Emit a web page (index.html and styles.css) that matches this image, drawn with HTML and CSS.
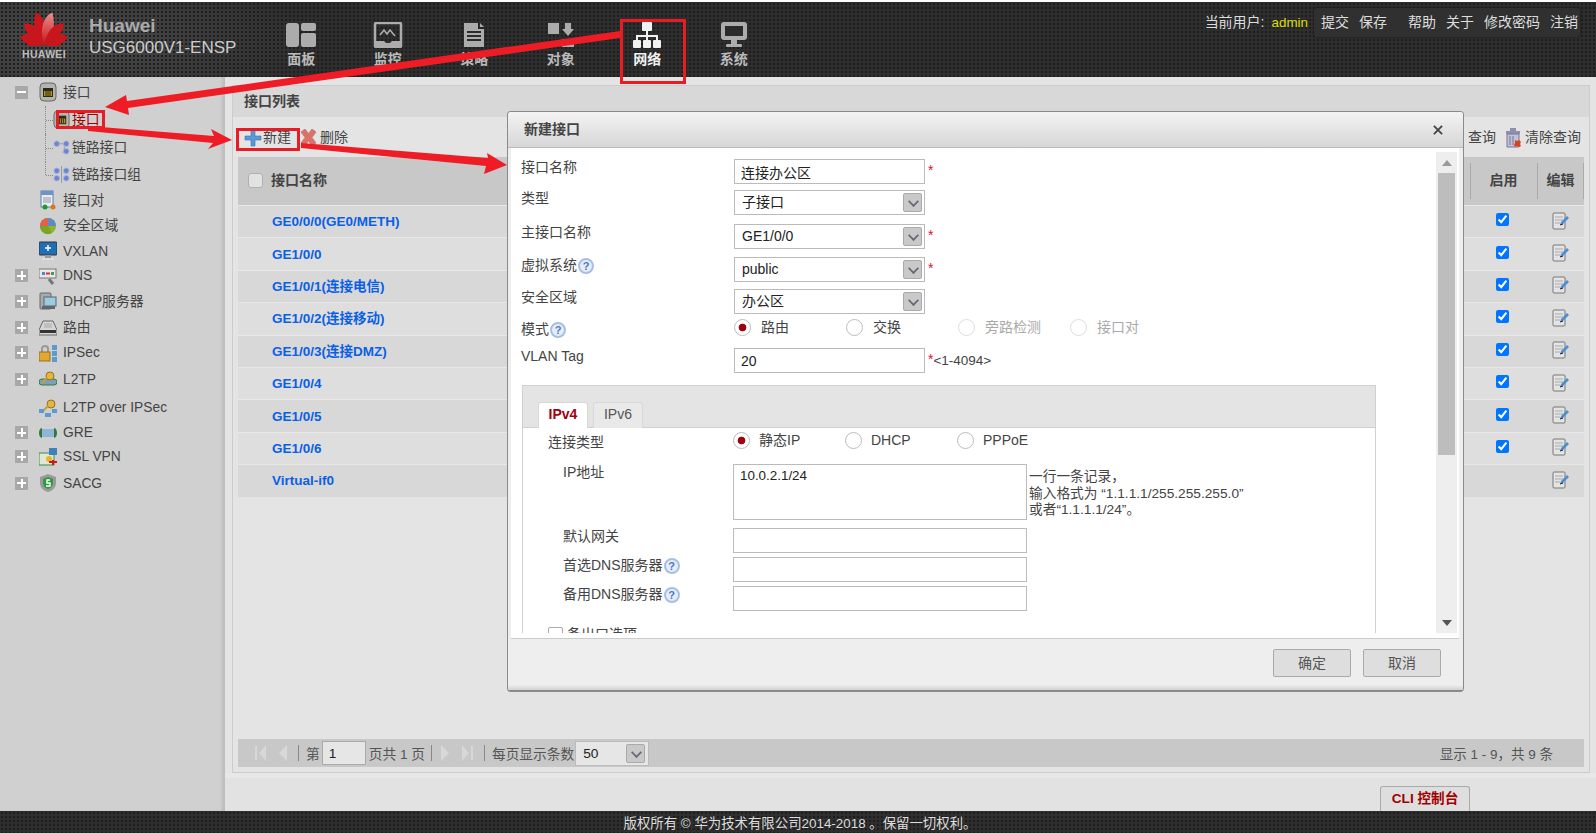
FILE: index.html
```html
<!DOCTYPE html>
<html lang="zh-CN">
<head>
<meta charset="utf-8">
<title>Huawei USG6000V1-ENSP</title>
<link rel="stylesheet" href="styles.css">
</head>
<body>
<svg class="defs" width="0" height="0" aria-hidden="true">
  <symbol id="i-port" viewBox="0 0 18 20"><rect x="1" y="1" width="16" height="18" rx="4" fill="#b5b5ae" stroke="#666"/><rect x="4" y="6" width="10" height="9" fill="#2a2a1e"/><path d="M5 9h8v5H5z" fill="#b8951e"/><path d="M7 9v5M9 9v5M11 9v5" stroke="#2a2a1e"/></symbol>
  <symbol id="i-links" viewBox="0 0 18 18"><path d="M5 5h6M12 8v6M10 14h3" stroke="#999" fill="none"/><circle cx="4" cy="5" r="3" fill="#6f84cf" stroke="#aab6e6"/><circle cx="14" cy="5" r="3" fill="#6f84cf" stroke="#aab6e6"/><circle cx="14" cy="13" r="3" fill="#6f84cf" stroke="#aab6e6"/></symbol>
  <symbol id="i-group" viewBox="0 0 18 18"><path d="M9 0v18" stroke="#999"/><circle cx="4" cy="5" r="3" fill="#6f84cf" stroke="#aab6e6"/><circle cx="14" cy="5" r="3" fill="#6f84cf" stroke="#aab6e6"/><circle cx="4" cy="13" r="3" fill="#6f84cf" stroke="#aab6e6"/><circle cx="14" cy="13" r="3" fill="#6f84cf" stroke="#aab6e6"/></symbol>
  <symbol id="i-pair" viewBox="0 0 18 20"><rect x="2" y="1" width="12" height="16" fill="#e8ecf4" stroke="#5d7fb0"/><path d="M2 1h12v4H2z" fill="#6d93c8"/><path d="M4 8h8M4 10h8M4 12h8" stroke="#999"/><circle cx="6" cy="17" r="2.500" fill="#1d9a2c"/><circle cx="14" cy="17" r="2.500" fill="#e4741a"/></symbol>
  <symbol id="i-zone" viewBox="0 0 18 18"><circle cx="9" cy="9" r="8" fill="#8fb52d"/><path d="M9 9V1a8 8 0 0 1 8 8z" fill="#5b8cc8"/><path d="M9 9V1a8 8 0 0 0-8 8z" fill="#e0604a"/><path d="M1 9h8l4 7a8 8 0 0 1-12-7z" fill="#7aa423"/></symbol>
  <symbol id="i-vxlan" viewBox="0 0 18 20"><rect x="0" y="1" width="18" height="13" rx="1" fill="#1f6fb4" stroke="#333"/><path d="M9 4v6M6 7h6" stroke="#fff" stroke-width="1.400"/><rect x="6" y="14" width="6" height="3" fill="#999"/><rect x="3" y="17" width="12" height="2" fill="#ddd"/></symbol>
  <symbol id="i-dns" viewBox="0 0 18 18"><rect x="0" y="2" width="17" height="9" fill="#e8e8e8" stroke="#777"/><path d="M3 5h3v3H3z" fill="#5e80c0"/><path d="M7 6.500h4" stroke="#c33" stroke-width="2"/><path d="M12 5h3v3h-3z" fill="#4a9a4a"/><path d="M10 12l4 5" stroke="#777" stroke-width="3"/></symbol>
  <symbol id="i-dhcp" viewBox="0 0 18 18"><rect x="1" y="1" width="11" height="16" rx="1" fill="#aaa" stroke="#666"/><rect x="5" y="5" width="12" height="9" fill="#9ccbe0" stroke="#567"/><rect x="3" y="14" width="13" height="3" fill="#666"/></symbol>
  <symbol id="i-route" viewBox="0 0 18 18"><path d="M4 2h10l4 9v5H0v-5z" fill="#d6d6d6" stroke="#666"/><rect x="1" y="11" width="16" height="3" fill="#333"/><path d="M6 4v5M8 4v5M10 4v5M12 4v5" stroke="#aaa"/></symbol>
  <symbol id="i-ipsec" viewBox="0 0 18 18"><path d="M3 8V5a3 3 0 0 1 6 0v3" fill="none" stroke="#999" stroke-width="2"/><rect x="0" y="8" width="11" height="9" fill="#e0a830" stroke="#96701c"/><rect x="13" y="1" width="5" height="5" fill="#5b9bd0"/><rect x="13" y="7" width="5" height="5" fill="#5b9bd0"/><rect x="13" y="13" width="5" height="5" fill="#5b9bd0"/></symbol>
  <symbol id="i-l2tp" viewBox="0 0 18 18"><rect x="0" y="9" width="18" height="6" rx="3" fill="#7aa0c0" stroke="#3a7a3a"/><circle cx="11" cy="6" r="4" fill="#e0b840" stroke="#96701c"/><path d="M8 8l-5 5" stroke="#c8a030" stroke-width="2"/></symbol>
  <symbol id="i-l2ipsec" viewBox="0 0 18 18"><circle cx="12" cy="5" r="4" fill="#e0b840" stroke="#96701c"/><path d="M9 7l-5 5" stroke="#c8a030" stroke-width="2"/><rect x="0" y="10" width="5" height="4" fill="#5b9bd0"/><rect x="13" y="10" width="5" height="4" fill="#5b9bd0"/><rect x="6" y="14" width="6" height="4" fill="#5b9bd0"/></symbol>
  <symbol id="i-gre" viewBox="0 0 18 18"><rect x="3" y="5" width="12" height="8" fill="#8fb5d8"/><path d="M3 4a3 5 0 0 0 0 10M15 4a3 5 0 0 1 0 10" fill="#2f7a3a"/></symbol>
  <symbol id="i-ssl" viewBox="0 0 18 18"><rect x="0" y="5" width="15" height="12" fill="#dfe8d0" stroke="#3a8a4a"/><rect x="10" y="0" width="8" height="7" fill="#3d82b8"/><circle cx="10" cy="11" r="3" fill="#f0b030"/><path d="M10 14h8M14 12v5" stroke="#d01818" stroke-width="2"/></symbol>
  <symbol id="i-sacg" viewBox="0 0 18 18"><path d="M9 0l8 3v6c0 5-4 8-8 9-4-1-8-4-8-9V3z" fill="#9a9a9a"/><path d="M9 3l5 2v4c0 3-2 5-5 6-3-1-5-3-5-6V5z" fill="#2d9a3c"/><path d="M11 6H8v3h3v3H7" fill="none" stroke="#fff" stroke-width="1.400"/></symbol>
  <symbol id="i-edit" viewBox="0 0 18 18"><rect x="1" y="1" width="12" height="16" rx="1" fill="#e4e4e4" stroke="#777"/><path d="M3 5h8M3 8h8M3 11h5" stroke="#aaa"/><path d="M8 13l1-3 6-6 2 2-6 6z" fill="#4f8fce"/><path d="M8 13l3-1" stroke="#222"/></symbol>
</svg>

<div class="page">
  <header class="topbar">
    <div class="brand">
      <div class="logo">
        <svg class="logo-mark" viewBox="0 0 46 35" width="46" height="35" aria-hidden="true">
          <defs>
            <linearGradient id="petal-hi" x1="0" y1="0" x2="0" y2="1"><stop offset="0" stop-color="#e8908c"/><stop offset="1" stop-color="#c8141c"/></linearGradient>
          </defs>
          <g fill="#c8161d">
            <path d="M0 0C-8-9-9-20-4-33 4-30 8-14 0 0Z" transform="translate(22.500 34) rotate(-7)"/>
            <path d="M0 0C8-9 9-20 4-33-4-30-8-14 0 0Z" transform="translate(23.500 34) rotate(7)" fill="url(#petal-hi)"/>
            <path d="M0 0C-8-7-9-18-5-28 3-26 7-12 0 0Z" transform="translate(22 34) rotate(-32)"/>
            <path d="M0 0C8-7 9-18 5-28-3-26-7-12 0 0Z" transform="translate(24 34) rotate(32)"/>
            <path d="M0 0C-7-5-9-15-5-24 3-22 6-10 0 0Z" transform="translate(22 34) rotate(-60)"/>
            <path d="M0 0C7-5 9-15 5-24-3-22-6-10 0 0Z" transform="translate(24 34) rotate(60)"/>
            <path d="M0 0C-6-3-7-10-4-17 2-15 4-7 0 0Z" transform="translate(21 35) rotate(-88)"/>
            <path d="M0 0C6-3 7-10 4-17-2-15-4-7 0 0Z" transform="translate(25 35) rotate(88)"/>
          </g>
        </svg>
        <span class="logo-word">HUAWEI</span>
      </div>
      <div class="brand-text">
        <span class="brand-name">Huawei</span>
        <span class="brand-model">USG6000V1-ENSP</span>
      </div>
    </div>
    <nav class="nav">
      <a class="nav-item"><svg viewBox="0 0 30 26" width="30" height="26"><rect x="0" y="1" width="13" height="24" rx="3" fill="#acacac"/><rect x="15" y="1" width="15" height="8" rx="2" fill="#acacac"/><rect x="15" y="11" width="15" height="14" rx="2" fill="#acacac"/></svg><span>面板</span></a>
      <a class="nav-item"><svg viewBox="0 0 30 26" width="30" height="26"><rect x="2" y="1" width="26" height="24" rx="1" fill="none" stroke="#acacac" stroke-width="2.500"/><path d="M7 13l4-5 3 4 3-4 5 6" fill="none" stroke="#acacac" stroke-width="1.600"/><path d="M3 19h8l2 2h4l2-2h8v5H3z" fill="#acacac"/></svg><span>监控</span></a>
      <a class="nav-item"><svg viewBox="0 0 30 26" width="30" height="26"><path d="M5 1h14v6h6v18H5z" fill="#acacac"/><path d="M21 1l4 4h-4z" fill="#acacac"/><path d="M8 10h14M8 14h14M8 18h14" stroke="#2b2b2b" stroke-width="2"/></svg><span>策略</span></a>
      <a class="nav-item"><svg viewBox="0 0 30 26" width="30" height="26"><rect x="2" y="1" width="11" height="11" fill="#acacac"/><path d="M19 1h6v6h3l-6 7-6-7h3z" fill="#acacac"/><rect x="16" y="17" width="12" height="8" fill="#acacac"/></svg><span>对象</span></a>
      <a class="nav-item nav-active"><svg viewBox="0 0 30 26" width="30" height="26"><rect x="10" y="0" width="10" height="9" rx="1" fill="#f2f2f2"/><path d="M15 9v5M5 19v-5h20v5M15 14v5" fill="none" stroke="#f2f2f2" stroke-width="2"/><rect x="1" y="18" width="8" height="8" rx="1" fill="#f2f2f2"/><rect x="11" y="18" width="8" height="8" rx="1" fill="#f2f2f2"/><rect x="21" y="18" width="8" height="8" rx="1" fill="#f2f2f2"/></svg><span>网络</span></a>
      <a class="nav-item"><svg viewBox="0 0 30 26" width="30" height="26"><rect x="2" y="0" width="26" height="18" rx="3" fill="#acacac"/><rect x="6" y="4" width="18" height="10" fill="#2b2b2b"/><rect x="12" y="18" width="6" height="4" fill="#acacac"/><rect x="7" y="22" width="16" height="3" rx="1" fill="#acacac"/></svg><span>系统</span></a>
    </nav>
    <div class="userbar">
      <span class="user-label">当前用户:</span>
      <span class="user-name">admin</span>
      <div class="user-actions">
        <a>提交</a><a class="act-wide">保存</a><a>帮助</a><a>关于</a><a>修改密码</a><a>注销</a>
      </div>
    </div>
  </header>

  <div class="workspace">
    <aside class="sidebar">
      <ul class="tree">
        <li class="node"><span class="exp exp-minus"></span><svg class="ico"><use href="#i-port"/></svg><span>接口</span></li>
        <li class="node sub sub-first"><svg class="ico-sub"><use href="#i-port"/></svg><span class="sel">接口</span></li>
        <li class="node sub"><svg class="ico-sub"><use href="#i-links"/></svg><span>链路接口</span></li>
        <li class="node sub sub-last"><svg class="ico-sub"><use href="#i-group"/></svg><span>链路接口组</span></li>
        <li class="node"><span class="exp exp-none"></span><svg class="ico"><use href="#i-pair"/></svg><span>接口对</span></li>
        <li class="node"><span class="exp exp-none"></span><svg class="ico"><use href="#i-zone"/></svg><span>安全区域</span></li>
        <li class="node"><span class="exp exp-none"></span><svg class="ico"><use href="#i-vxlan"/></svg><span>VXLAN</span></li>
        <li class="node"><span class="exp"></span><svg class="ico"><use href="#i-dns"/></svg><span>DNS</span></li>
        <li class="node"><span class="exp"></span><svg class="ico"><use href="#i-dhcp"/></svg><span>DHCP服务器</span></li>
        <li class="node"><span class="exp"></span><svg class="ico"><use href="#i-route"/></svg><span>路由</span></li>
        <li class="node"><span class="exp"></span><svg class="ico"><use href="#i-ipsec"/></svg><span>IPSec</span></li>
        <li class="node"><span class="exp"></span><svg class="ico"><use href="#i-l2tp"/></svg><span>L2TP</span></li>
        <li class="node"><span class="exp exp-none"></span><svg class="ico"><use href="#i-l2ipsec"/></svg><span>L2TP over IPSec</span></li>
        <li class="node"><span class="exp"></span><svg class="ico"><use href="#i-gre"/></svg><span>GRE</span></li>
        <li class="node"><span class="exp"></span><svg class="ico"><use href="#i-ssl"/></svg><span>SSL VPN</span></li>
        <li class="node"><span class="exp"></span><svg class="ico"><use href="#i-sacg"/></svg><span>SACG</span></li>
      </ul>
    </aside>

    <main class="main">
      <section class="panel">
        <h1 class="panel-title">接口列表</h1>
        <div class="toolbar">
          <a class="tool"><svg class="tool-ico" viewBox="0 0 18 18"><path d="M7 1h4v6h6v4h-6v6H7v-6H1V7h6z" fill="#5a97d6" stroke="#3c72ad" stroke-width=".6"/></svg>新建</a>
          <a class="tool tool-del"><svg class="tool-ico-sm" viewBox="0 0 15 17"><path d="M0 3l4-3 3.500 4.500L11 0l4 3-4 5.500L15 14l-4 3-3.500-5L4 17l-4-3 4-5.500z" fill="#de7068" stroke="#a8827e" stroke-width=".8"/></svg>删除</a>
          <span class="tool-gap"></span>
          <a class="tool">查询</a>
          <a class="tool tool-clear"><svg class="tool-ico-sm" viewBox="0 0 17 20"><rect x="5" y="0" width="6" height="3" fill="#8f8fb0"/><rect x="1" y="3" width="14" height="3" fill="#8f8fb0"/><path d="M2 6h12v13H2z" fill="#c2c2d6" stroke="#77779a"/><path d="M5 8v9M8 8v9" stroke="#77779a"/><path d="M10 12l2 1 2-1 2 2-1 2 1 2-2 1-2-1-2 1-1-2 1-2z" fill="#d8431f"/></svg>清除查询</a>
        </div>
        <div class="table">
          <div class="thead">
            <div class="th th-name"><span class="hcheck"></span>接口名称</div>
            <div class="th th-en">启用</div>
            <div class="th th-ed">编辑</div>
          </div>
          <div class="tr"><a class="td-name">GE0/0/0(GE0/METH)</a><div class="td-en"><input type="checkbox" checked></div><div class="td-ed"><svg class="edit"><use href="#i-edit"/></svg></div></div>
          <div class="tr"><a class="td-name">GE1/0/0</a><div class="td-en"><input type="checkbox" checked></div><div class="td-ed"><svg class="edit"><use href="#i-edit"/></svg></div></div>
          <div class="tr"><a class="td-name">GE1/0/1(连接电信)</a><div class="td-en"><input type="checkbox" checked></div><div class="td-ed"><svg class="edit"><use href="#i-edit"/></svg></div></div>
          <div class="tr"><a class="td-name">GE1/0/2(连接移动)</a><div class="td-en"><input type="checkbox" checked></div><div class="td-ed"><svg class="edit"><use href="#i-edit"/></svg></div></div>
          <div class="tr"><a class="td-name">GE1/0/3(连接DMZ)</a><div class="td-en"><input type="checkbox" checked></div><div class="td-ed"><svg class="edit"><use href="#i-edit"/></svg></div></div>
          <div class="tr"><a class="td-name">GE1/0/4</a><div class="td-en"><input type="checkbox" checked></div><div class="td-ed"><svg class="edit"><use href="#i-edit"/></svg></div></div>
          <div class="tr"><a class="td-name">GE1/0/5</a><div class="td-en"><input type="checkbox" checked></div><div class="td-ed"><svg class="edit"><use href="#i-edit"/></svg></div></div>
          <div class="tr"><a class="td-name">GE1/0/6</a><div class="td-en"><input type="checkbox" checked></div><div class="td-ed"><svg class="edit"><use href="#i-edit"/></svg></div></div>
          <div class="tr"><a class="td-name">Virtual-if0</a><div class="td-en"></div><div class="td-ed"><svg class="edit"><use href="#i-edit"/></svg></div></div>
        </div>
        <div class="pager">
          <svg class="pg pg-first" viewBox="0 0 11 18"><path d="M1 2v14" stroke="#d8d8d8" stroke-width="2"/><path d="M11 1v16L4 9z" fill="#d8d8d8"/></svg>
          <svg class="pg pg-prev" viewBox="0 0 9 18"><path d="M9 1v16L1 9z" fill="#d8d8d8"/></svg>
          <span class="pg-sep"></span>
          <span class="pg-text">第</span>
          <input class="pg-input" type="text" value="1">
          <span class="pg-text">页共 1 页</span>
          <span class="pg-sep pg-sep-b"></span>
          <svg class="pg pg-next" viewBox="0 0 9 18"><path d="M0 1v16l8-8z" fill="#d8d8d8"/></svg>
          <svg class="pg pg-last" viewBox="0 0 11 18"><path d="M0 1v16l7-8z" fill="#d8d8d8"/><path d="M10 2v14" stroke="#d8d8d8" stroke-width="2"/></svg>
          <span class="pg-sep pg-sep-c"></span>
          <span class="pg-text">每页显示条数</span>
          <div class="pg-select"><span>50</span><i class="arrow"></i></div>
          <span class="pg-info">显示 1 - 9，共 9 条</span>
        </div>
      </section>
      <div class="cli-row"><a class="cli">CLI 控制台</a></div>
    </main>
  </div>

  <footer class="footer">版权所有 © 华为技术有限公司2014-2018 。保留一切权利。</footer>

  <div class="modal">
    <div class="modal-head"><span class="modal-title">新建接口</span><svg class="modal-x" viewBox="0 0 11 11"><path d="M1 1l9 9M10 1l-9 9" stroke="#444" stroke-width="2"/></svg></div>
    <div class="modal-body">
      <div class="scroller">
        <div class="form">
          <label class="lab">接口名称</label>
          <div class="field"><input class="txt" type="text" value="连接办公区"><b class="req">*</b></div>
          <label class="lab">类型</label>
          <div class="field"><div class="select"><span>子接口</span><i class="arrow"></i></div></div>
          <label class="lab">主接口名称</label>
          <div class="field"><div class="select"><span>GE1/0/0</span><i class="arrow"></i></div><b class="req">*</b></div>
          <label class="lab">虚拟系统<span class="help">?</span></label>
          <div class="field"><div class="select"><span>public</span><i class="arrow"></i></div><b class="req">*</b></div>
          <label class="lab">安全区域</label>
          <div class="field"><div class="select"><span>办公区</span><i class="arrow"></i></div></div>
          <label class="lab">模式<span class="help">?</span></label>
          <div class="field radios">
            <span class="radio on">路由</span>
            <span class="radio">交换</span>
            <span class="radio off">旁路检测</span>
            <span class="radio off">接口对</span>
          </div>
          <label class="lab">VLAN Tag</label>
          <div class="field"><input class="txt" type="text" value="20"><b class="req">*</b><span class="range">&lt;1-4094&gt;</span></div>
        </div>

        <div class="tabs">
          <div class="tab-bar"><span class="tab tab-on">IPv4</span><span class="tab">IPv6</span></div>
          <div class="tab-body">
            <label class="lab lab-a">连接类型</label>
            <div class="field radios radios-b">
              <span class="radio on">静态IP</span>
              <span class="radio">DHCP</span>
              <span class="radio">PPPoE</span>
            </div>
            <label class="lab lab-b">IP地址</label>
            <div class="field"><textarea class="area">10.0.2.1/24</textarea>
              <div class="hint">一行一条记录，<br>输入格式为 “1.1.1.1/255.255.255.0”<br>或者“1.1.1.1/24”。</div></div>
            <label class="lab lab-b">默认网关</label>
            <div class="field"><input class="txt txt-w" type="text"></div>
            <label class="lab lab-b">首选DNS服务器<span class="help">?</span></label>
            <div class="field"><input class="txt txt-w" type="text"></div>
            <label class="lab lab-b">备用DNS服务器<span class="help">?</span></label>
            <div class="field"><input class="txt txt-w" type="text"></div>
            <div class="backup"><span class="bcheck"></span>备出口选项</div>
          </div>
        </div>
      </div>
      <div class="scrollbar">
        <div class="sb-btn"><i class="sb-up"></i></div>
        <div class="sb-thumb"></div>
        <div class="sb-rest"></div>
        <div class="sb-btn"><i class="sb-down"></i></div>
      </div>
    </div>
    <div class="modal-foot">
      <button class="btn" type="button">确定</button>
      <button class="btn" type="button">取消</button>
    </div>
  </div>

  <svg class="marks" viewBox="0 0 1596 833" aria-hidden="true">
    <g fill="none" stroke="#e81c24" stroke-width="3">
      <rect x="621.500" y="20.500" width="63" height="62"/>
      <rect x="57.500" y="111.500" width="46" height="16"/>
      <rect x="237.500" y="129.500" width="61" height="20"/>
    </g>
    <g fill="#ee1c25">
      <path d="M620 31L620 38 128 108 129 115 105 107 126 95 127 101Z"/>
      <path d="M88 126L88 131 213 143 208 149 232 140 211 129 214 136Z"/>
      <path d="M301 143L301 148 486 166 484 174 507 165 487 153 488 158Z"/>
    </g>
  </svg>
</div>
</body>
</html>
```
FILE: styles.css
```css
* { box-sizing: border-box; }
html, body { margin: 0; height: 100%; overflow: hidden; }
body {
  background: #fff;
  font: 14px/17px "Liberation Sans", "Noto Sans CJK SC", sans-serif;
  color: #444;
}
a { color: inherit; text-decoration: none; }
ul { list-style: none; margin: 0; padding: 0; }
.defs { position: absolute; }

.page {
  position: relative;
  width: 1596px;
  height: 833px;
  padding-top: 2px;
  display: flex;
  flex-direction: column;
}

/* header */
.topbar {
  height: 75px;
  flex: none;
  display: flex;
  color: #ccc;
  background:
    radial-gradient(circle at 2px 2px, #1e1e1e 1px, transparent 1.400px) 0 0 / 4px 4px,
    radial-gradient(ellipse 240px 80px at 70px 40px, #4c4c4c, transparent),
    #2e2e2e;
}
.brand { width: 258px; flex: none; display: flex; padding: 9px 0 0 21px; }
.logo { width: 46px; display: flex; flex-direction: column; align-items: center; }
.logo-mark { display: block; }
.logo-word { font-size: 10.500px; line-height: 12px; font-weight: bold; color: #bbb; margin-top: 2px; letter-spacing: .3px; }
.brand-text { display: flex; flex-direction: column; margin-left: 22px; padding-top: 3px; }
.brand-name { font-size: 19px; line-height: 23px; font-weight: bold; color: #aaa; }
.brand-model { font-size: 17px; line-height: 22px; color: #ccc; }
.nav { display: flex; }
.nav-item {
  width: 86.500px;
  display: flex;
  flex-direction: column;
  align-items: center;
  padding-top: 20px;
  font-weight: bold;
  color: #bbb;
}
.nav-item svg { display: block; margin-bottom: 3px; }
.nav-active { color: #f2f2f2; }
.userbar {
  margin-left: auto;
  display: flex;
  align-items: flex-start;
  padding: 6px 16px 0 0;
  line-height: 29px;
}
.user-name { color: #dddd00; margin-left: 7px; font-size: 13.400px; }
.user-label { color: #ddd; }
.user-actions {
  margin-left: 6px;
  width: 266px;
  height: 29px;
  padding-left: 7px;
  display: flex;
  gap: 10px;
  color: #ddd;
  background: #303030;
  border-radius: 2px;
  box-shadow: 0 0 2px #111;
}
.act-wide { margin-right: 11px; }

/* workspace */
.workspace { flex: 1; display: flex; min-height: 0; background: #e4e4e4; }
.sidebar {
  width: 225px;
  flex: none;
  background: #d0d0d0;
  box-shadow: inset -4px 0 3px -1px #bdbdbd;
  padding: 1px 0 0 15px;
  font-size: 13.800px;
}
.tree {
  display: grid;
  grid-template-rows: 28px 27.500px 28px 26.500px 24.500px 26.500px 24px 25px 26.500px 26px 24px 29px 28.500px 21px 27.500px 25px;
}
.node { display: flex; align-items: center; position: relative; }
.exp {
  width: 13px; height: 13px; flex: none; margin-right: 11px;
  background:
    linear-gradient(#fff, #fff) center / 9px 2px no-repeat,
    linear-gradient(#fff, #fff) center / 2px 9px no-repeat,
    #a8a8a8;
}
.exp-minus { background: linear-gradient(#fff, #fff) center / 9px 2px no-repeat, #a8a8a8; }
.exp-none { background: none; }
.ico { width: 18px; height: 20px; flex: none; margin-right: 6px; }
.sub { padding-left: 38px; }
.ico-sub { width: 17px; height: 19px; flex: none; margin-right: 2px; }
.sel { color: #a00000; }
.sub::before {
  content: "";
  position: absolute;
  left: 30px;
  top: 0;
  bottom: 0;
  border-left: 1px dotted #888;
}
.sub::after {
  content: "";
  position: absolute;
  left: 31px;
  width: 7px;
  top: 50%;
  border-top: 1px dotted #888;
}
.sub-last::before { bottom: 50%; }

.main { flex: 1; display: flex; flex-direction: column; padding: 8px 6px 0 7px; min-width: 0; }
.panel {
  height: 688px;
  flex: none;
  display: flex;
  flex-direction: column;
  padding: 0 5px;
  border: 1px solid #ccc;
  background: #e4e4e4;
}
.panel-title {
  margin: 0 -5px;
  height: 31px;
  padding: 7px 0 0 11px;
  font-size: 14px;
  font-weight: bold;
  line-height: 17px;
  color: #444;
  background: #d8d8d8;
}
.toolbar { height: 40px; flex: none; display: flex; align-items: center; padding: 1px 3px 0 6px; }
.tool { display: flex; align-items: center; }
.tool-ico { width: 18px; height: 18px; margin-right: 1px; }
.tool-ico-sm { width: 15px; height: 17px; margin-right: 4px; }
.tool-del { margin-left: 10px; }
.tool-gap { flex: 1; }
.tool-clear { margin-left: 9px; }
.tool-clear .tool-ico-sm { width: 17px; height: 20px; margin-right: 3px; }

.thead { height: 48px; display: flex; background: #c8c8c8; }
.th { display: flex; align-items: center; font-weight: bold; position: relative; padding-bottom: 2px; }
.th-name { flex: 1; padding-left: 10px; }
.th-en, .th-ed { justify-content: center; }
.th-en { width: 67px; }
.th-ed { width: 47px; }
.th-en::before, .th-ed::before, .th-ed::after {
  content: "";
  position: absolute;
  left: 0;
  top: 6px;
  bottom: 6px;
  border-left: 1px solid #aaa;
}
.th-ed::after { left: auto; right: 0; }
.hcheck {
  width: 15px; height: 15px; margin-right: 8px;
  background: #e2e2e2;
  border: 1px solid #b0b0b0;
  border-radius: 3px;
}
.tr { height: 32.400px; display: flex; align-items: center; background: #d8d8d8; border-top: 1px solid #e8e8e8; }
.tr:nth-child(odd) { background: #dedede; }
.td-name { flex: 1; padding-left: 34px; font-size: 13.500px; font-weight: bold; color: #0a5fe8; }
.td-en, .td-ed { display: flex; justify-content: center; align-items: center; }
.td-en { width: 65px; margin-right: 2px; padding-bottom: 4px; }
.td-ed { width: 47px; padding-bottom: 2px; }
.td-en input { margin: 0; width: 13px; height: 13px; }
.edit { width: 18px; height: 18px; }

.pager {
  margin-top: auto;
  margin-bottom: 5px;
  height: 28px;
  flex: none;
  display: flex;
  align-items: center;
  background: #c8c8c8;
  color: #555;
  font-size: 13.700px;
}
.pg { height: 18px; flex: none; }
.pg-first { width: 11px; margin-left: 17px; }
.pg-prev { width: 9px; margin-left: 12px; }
.pg-next { width: 9px; margin-left: 9px; }
.pg-last { width: 11px; margin-left: 12px; }
.pg-sep { width: 1px; height: 16px; background: #888; margin: 0 7px 0 11px; flex: none; }
.pg-sep-b { margin: 0 0 0 6px; }
.pg-sep-c { margin: 0 7px 0 11px; }
.pg-text { flex: none; padding-top: 2px; }
.pg-input {
  width: 44px; height: 24px; margin: 0 3px 0 2px; padding: 0 6px;
  border: 1px solid #aaa;
  background: #e6e6e6;
  font: inherit;
  color: #222;
}
.pg-select {
  width: 74px; height: 25px; margin-left: 1px; padding: 0 3px 0 7px;
  display: flex; align-items: center; justify-content: space-between;
  border: 1px solid #bbb;
  background: #e6e6e6;
  color: #222;
}
.pg-info { margin-left: auto; margin-right: 31px; font-size: 13.500px; padding-top: 3px; }
.cli-row {
  flex: 1;
  display: flex;
  justify-content: flex-end;
  align-items: flex-end;
  padding-right: 126px;
  margin: 0 -6px 0 -7px;
  border-top: 5px solid #e8e8e8;
  background: #e2e2e2;
}
.cli {
  width: 90px; height: 25px;
  text-align: center;
  line-height: 23px;
  font-size: 13.600px;
  font-weight: bold;
  color: #a00000;
  background: #dedede;
  border: 1px solid #aaa;
  border-bottom: 0;
  border-radius: 3px 3px 0 0;
}

.footer {
  height: 22px;
  flex: none;
  padding-left: 4px;
  text-align: center;
  font-size: 13.400px;
  line-height: 25px;
  color: #ddd;
  background:
    radial-gradient(circle at 2px 2px, #1e1e1e 1px, transparent 1.400px) 0 0 / 4px 4px,
    #2e2e2e;
}

/* modal */
.modal {
  position: absolute;
  left: 507px;
  top: 111px;
  width: 957px;
  height: 581px;
  display: flex;
  flex-direction: column;
  background: #eee;
  border: 1px solid #8a8a8a;
  border-bottom-width: 2px;
  border-radius: 4px;
}
.modal-head {
  height: 36px;
  flex: none;
  display: flex;
  align-items: center;
  justify-content: space-between;
  padding: 0 20px 0 16px;
  background: linear-gradient(#f4f4f4, #d6d6d6);
  border-bottom: 1px solid #bbb;
  border-radius: 3px 3px 0 0;
}
.modal-title { font-weight: bold; color: #444; }
.modal-x { width: 10px; height: 10px; }
.modal-body {
  height: 491px;
  flex: none;
  margin: 0 4px 0 3px;
  padding: 4px 2px 5px 0;
  display: flex;
  background: #fff;
  border-bottom: 1px solid #ccc;
}
.scroller { flex: 1; min-width: 0; overflow: hidden; padding-left: 10px; }
.form {
  display: grid;
  grid-template-columns: 213px 1fr;
  grid-template-rows: 31px 34px 33px 32px 32px 27px 37px;
  padding-top: 7px;
}
.lab { display: flex; align-items: center; height: 17px; color: #444; }
.help {
  width: 16px; height: 16px; flex: none; margin-left: 1px;
  border: 2px solid #a6bfe6;
  border-radius: 50%;
  background: #e6edf8;
  text-align: center;
  font-size: 11px;
  font-weight: bold;
  line-height: 12px;
  color: #4d78c4;
}
.field { display: flex; align-items: flex-start; min-width: 0; }
.txt {
  width: 191px; height: 25px; padding: 0 6px; margin: 0;
  border: 1px solid #bbb;
  background: #fff;
  font: inherit;
  color: #222;
  border-radius: 0;
}
.txt-w { width: 294px; }
.req { color: #e01030; font-weight: normal; margin-left: 3px; line-height: 22px; }
.range { line-height: 25px; font-size: 13.500px; }
.select {
  width: 191px; height: 25px; padding: 0 2px 0 7px;
  display: flex; align-items: center; justify-content: space-between;
  border: 1px solid #bbb;
  background: #fff;
  color: #222;
}
.arrow {
  width: 19px; height: 19px;
  flex: none;
  border: 1px solid #aaa;
  border-radius: 2px;
  background: #c9c9c9;
  position: relative;
}
.arrow::after {
  content: "";
  position: absolute;
  left: 5px;
  top: 3px;
  width: 7px;
  height: 7px;
  border-right: 2px solid #667;
  border-bottom: 2px solid #667;
  transform: rotate(45deg) scale(.85);
}
.radios { display: grid; grid-template-columns: repeat(4, 112px); align-items: center; height: 17px; margin-top: -2px; }
.radio { display: flex; align-items: center; gap: 10px; color: #444; }
.radio::before {
  content: "";
  width: 15px; height: 15px; flex: none;
  border-radius: 50%;
  border: 1px solid #bbb;
  background: #fff;
}
.radio.on::before { background: radial-gradient(circle, #a00010 0 3.500px, #fff 4.200px); }
.radio.off { color: #aaa; }
.radio.off::before { border-color: #ddd; }

.tabs {
  width: 854px;
  margin-left: 1px;
  height: 300px;
  border: 1px solid #d0d0d0;
  border-bottom: 0;
  background: #fff;
}
.tab-bar {
  height: 42px;
  display: flex;
  align-items: flex-end;
  gap: 5px;
  padding-left: 15px;
  background: #e4e4e4;
  border-bottom: 1px solid #d0d0d0;
}
.tab {
  width: 50px; height: 26px;
  margin-bottom: -1px;
  text-align: center;
  line-height: 22px;
  color: #555;
  background: #e9e9e9;
  border: 1px solid #d8d8d8;
  border-bottom: 0;
  border-radius: 3px 3px 0 0;
}
.tab-on { background: #fff; color: #a00010; font-weight: bold; }
.tab-body {
  display: grid;
  grid-template-columns: 210px 1fr;
  grid-template-rows: 32px 64px 29px 29px 38px 20px;
  padding-top: 4px;
}
.lab-a { padding-left: 25px; margin-top: 2px; }
.lab-b { padding-left: 40px; }
.radios-b { margin-top: 0; }
.radios-b .radio { gap: 9px; }
.area {
  width: 294px; height: 56px; padding: 2px 6px; margin: 0;
  border: 1px solid #bbb;
  font: 13.400px/17px "Liberation Sans", sans-serif;
  color: #222;
  resize: none;
  overflow: hidden;
}
.hint { margin: 5px 0 0 2px; font-size: 13.700px; line-height: 16.500px; white-space: nowrap; }
.backup { grid-column: 1 / -1; padding-left: 25px; display: flex; align-items: center; gap: 4px; }
.bcheck { width: 15px; height: 15px; border: 1px solid #aaa; border-radius: 2px; }
.scrollbar { width: 21px; flex: none; display: flex; flex-direction: column; background: #eee; }
.sb-btn { height: 21px; flex: none; display: flex; align-items: center; justify-content: center; }
.sb-up { border: 5px solid transparent; border-bottom: 6px solid #999; border-top: 0; }
.sb-down { border: 5px solid transparent; border-top: 6px solid #555; border-bottom: 0; }
.sb-thumb { height: 282px; flex: none; margin: 0 2px; background: #bdbdbd; }
.sb-rest { flex: 1; }
.modal-foot {
  flex: 1;
  display: flex;
  justify-content: flex-end;
  gap: 12px;
  padding: 10px 22px 0 0;
  background: linear-gradient(#eee 0 46px, #d0d0d0);
}
.btn {
  width: 78px; height: 28px;
  font: inherit;
  color: #555;
  background: #dedede;
  border: 1px solid #aaa;
  border-radius: 2px;
}

.marks { position: absolute; left: 0; top: 0; width: 1596px; height: 833px; pointer-events: none; }
```
